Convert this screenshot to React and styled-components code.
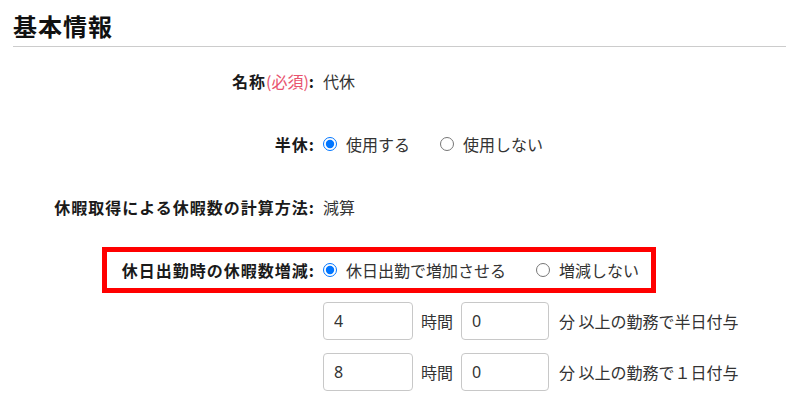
import React from "react";
import styled, { createGlobalStyle } from "styled-components";

const Global = createGlobalStyle`
  html, body { margin: 0; padding: 0; background: #fff; }
  body {
    font-family: "Noto Sans CJK JP", "Noto Sans", sans-serif;
    color: #333;
    font-size: 16px;
  }
`;

const Page = styled.div`
  padding: 0 0 0 13px;
`;

const Title = styled.h2`
  margin: 0;
  padding: 8px 0 2px;
  font-size: 24px;
  line-height: 36px;
  font-weight: 700;
  letter-spacing: 1px;
  color: #111;
  border-bottom: 1px solid #ccc;
`;

const Form = styled.div`
  display: flex;
  flex-direction: column;
  gap: 17px;
  margin-top: 11px;
`;

const Row = styled.div`
  display: grid;
  grid-template-columns: 302px auto;
  column-gap: 8px;
  align-items: center;
  min-height: 46px;
`;

const Label = styled.div`
  text-align: right;
  font-weight: 700;
  letter-spacing: 1px;
  color: #1a1a1a;
  white-space: nowrap;
  width: ${(p) => (p.$width ? `${p.$width}px` : "auto")};
`;

const Required = styled.span`
  color: #e8546e;
  font-weight: 400;
  letter-spacing: 0;
`;

const Value = styled.div`
  display: flex;
  align-items: center;
  color: #333;
  white-space: nowrap;
`;

const Options = styled.div`
  display: flex;
  align-items: center;
  gap: 30px;
`;

const Option = styled.label`
  display: inline-flex;
  align-items: center;
  gap: 9px;
  color: #333;
`;

const Radio = styled.input.attrs({ type: "radio" })`
  margin: 0;
  width: 14px;
  height: 14px;
`;

const HighlightRow = styled.div`
  display: flex;
`;

const Frame = styled.div`
  display: flex;
  align-items: center;
  gap: 8px;
  margin-left: 89px;
  height: 46px;
  box-sizing: border-box;
  border: 5px solid #ff0000;
  padding: 0 12px 0 10px;
`;

const Inputs = styled.div`
  display: flex;
  flex-direction: column;
  gap: 13px;
  margin-top: -8px;
`;

const InputLine = styled.div`
  display: flex;
  align-items: center;
  gap: 8px;
  padding-left: 310px;
  color: #333;
  white-space: nowrap;
`;

const NumInput = styled.input`
  box-sizing: border-box;
  width: ${(p) => p.$w}px;
  height: 38px;
  border: 1px solid #c8c8c8;
  border-radius: 4px;
  padding: 0 10px;
  font-family: "Noto Sans", "Noto Sans CJK JP", sans-serif;
  font-size: 16px;
  color: #333;
  outline: none;
`;

const Unit = styled.span`
  margin-left: ${(p) => p.$ml || 0}px;
`;

function RadioGroup({ name, options, checked }) {
  return (
    <Options>
      {options.map((o, i) => (
        <Option key={o}>
          <Radio name={name} defaultChecked={i === checked} />
          {o}
        </Option>
      ))}
    </Options>
  );
}

function DurationLine({ hours, tail }) {
  return (
    <InputLine>
      <NumInput $w={90} defaultValue={hours} />
      <Unit>時間</Unit>
      <NumInput $w={88} defaultValue="0" />
      <Unit $ml={2}>{tail}</Unit>
    </InputLine>
  );
}

export default function App() {
  return (
    <Page>
      <Global />
      <Title>基本情報</Title>
      <Form>
        <Row>
          <Label>
            名称<Required>(必須)</Required>:
          </Label>
          <Value>代休</Value>
        </Row>
        <Row>
          <Label>半休:</Label>
          <Value>
            <RadioGroup name="half" options={["使用する", "使用しない"]} checked={0} />
          </Value>
        </Row>
        <Row>
          <Label>休暇取得による休暇数の計算方法:</Label>
          <Value>減算</Value>
        </Row>
        <HighlightRow>
          <Frame>
            <Label $width={198}>休日出勤時の休暇数増減:</Label>
            <Value>
              <RadioGroup
                name="holiday"
                options={["休日出勤で増加させる", "増減しない"]}
                checked={0}
              />
            </Value>
          </Frame>
        </HighlightRow>
        <Inputs>
          <DurationLine hours="4" tail="分 以上の勤務で半日付与" />
          <DurationLine hours="8" tail="分 以上の勤務で１日付与" />
        </Inputs>
      </Form>
    </Page>
  );
}
